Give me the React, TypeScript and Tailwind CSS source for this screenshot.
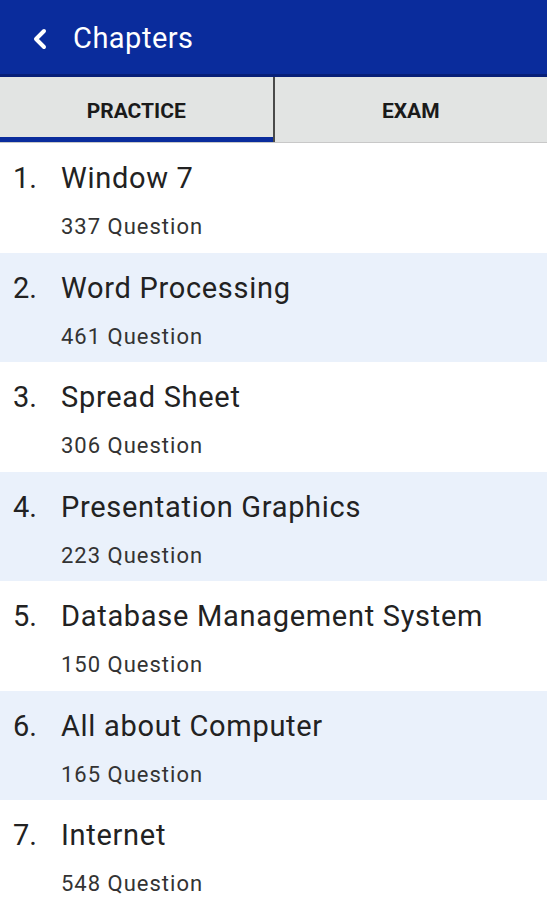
const chapters = [
  { title: 'Window 7', count: 337 },
  { title: 'Word Processing', count: 461 },
  { title: 'Spread Sheet', count: 306 },
  { title: 'Presentation Graphics', count: 223 },
  { title: 'Database Management System', count: 150 },
  { title: 'All about Computer', count: 165 },
  { title: 'Internet', count: 548 },
]

export default function App() {
  return (
    <div className="w-[547px] h-[900px] overflow-hidden bg-white font-['Roboto',sans-serif]">
      {/* toolbar */}
      <div className="h-[77px] bg-[#0a2c9c] border-b-[3px] border-[#071f78] flex items-center pt-[3px]">
        <svg className="ml-[31px] w-[18px] h-[22px]" viewBox="0 0 18 22" fill="none">
          <path d="M13 3 L5 11 L13 19" stroke="white" strokeWidth="4" strokeLinecap="round" strokeLinejoin="round" />
        </svg>
        <span className="ml-[24px] text-[29px] tracking-[0.5px] text-white">Chapters</span>
      </div>

      {/* tabs */}
      <div className="flex h-[66px] bg-[#e2e4e3] border-b border-[#c8c8c8]">
        <div className="flex-1 relative flex items-center justify-center border-r-2 border-[#4a4a4a] pt-[4px]">
          <span className="text-[21px] font-bold text-[#1a1a1a]">PRACTICE</span>
          <div className="absolute left-0 right-0 bottom-0 h-[5px] bg-[#0a2c9c]" />
        </div>
        <div className="flex-1 flex items-center justify-center pt-[4px]">
          <span className="text-[21px] font-bold text-[#1a1a1a]">EXAM</span>
        </div>
      </div>

      {/* chapter list */}
      <div>
        {chapters.map((c, i) => (
          <div
            key={c.title}
            className={`h-[109.5px] flex pt-[18px] ${i % 2 === 1 ? 'bg-[#eaf1fb]' : 'bg-white'}`}
          >
            <span className="w-[61px] pl-[13px] text-[29px] leading-[34px] text-[#222]">{i + 1}.</span>
            <div>
              <div className="text-[29px] leading-[34px] tracking-[0.7px] text-[#222]">{c.title}</div>
              <div className="mt-[19px] text-[22px] leading-[26px] tracking-[1px] text-[#333]">{c.count} Question</div>
            </div>
          </div>
        ))}
      </div>
    </div>
  )
}
